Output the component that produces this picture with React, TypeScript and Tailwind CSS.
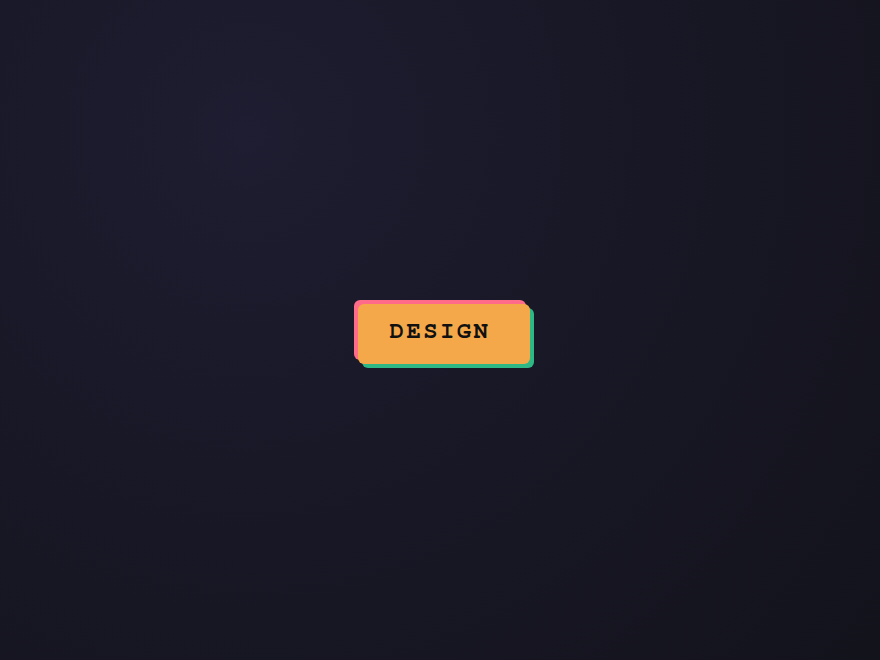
export default function App() {
  return (
    <div className="flex min-h-screen w-full items-center justify-center bg-[radial-gradient(circle_at_28%_20%,#1e1d31_0%,#181725_50%,#13131c_100%)]">
      <button className="flex h-[60px] w-[172px] translate-x-1 translate-y-1 items-center justify-center rounded-md bg-[#f4a84a] font-['FreeMono','TeX_Gyre_Cursor',monospace] text-[24px] font-bold tracking-[0.1em] text-[#111] shadow-[-4px_-4px_0_#ff6b88,4px_4px_0_#2db886]">
        <span className="-translate-x-1 -translate-y-[3px]">DESIGN</span>
      </button>
    </div>
  );
}
